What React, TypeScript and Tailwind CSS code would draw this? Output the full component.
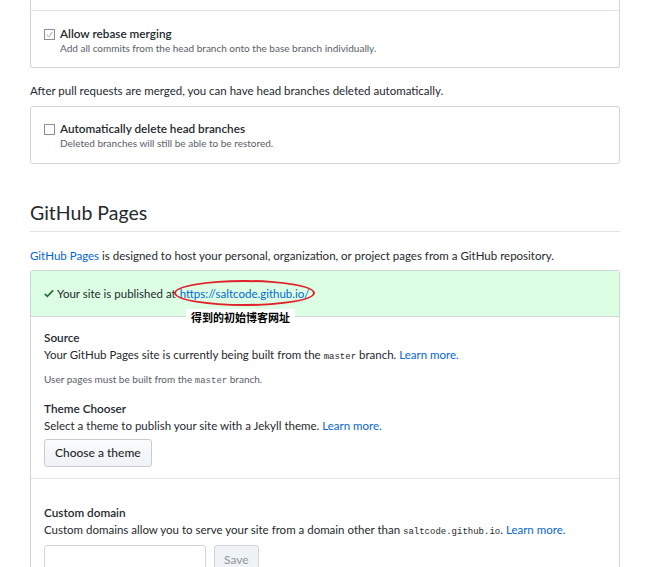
import React from "react";

const font = { fontFamily: 'Lato, "Noto Sans CJK SC", sans-serif' };

function Check({ checked }: { checked?: boolean }) {
  return (
    <span className="mt-[3px] flex h-[11px] w-[11px] shrink-0 items-center justify-center border border-[#8a8f96] bg-white">
      {checked && (
        <svg width="9" height="9" viewBox="0 0 9 9">
          <path d="M1.5 4.8 L3.6 6.8 L7.6 1.8" fill="none" stroke="#9aa0a6" strokeWidth="1" />
        </svg>
      )}
    </span>
  );
}

function Option({ title, desc, checked }: { title: string; desc: string; checked?: boolean }) {
  return (
    <div className="flex gap-[5px] px-[13px]">
      <Check checked={checked} />
      <div>
        <div className="text-[11.75px] leading-[15px] font-semibold text-[#24292e]">{title}</div>
        <div className="text-[10px] leading-[15px] text-[#586069]">{desc}</div>
      </div>
    </div>
  );
}

function Code({ children }: { children: React.ReactNode }) {
  return <span className="font-['Liberation_Mono',monospace] text-[9px]">{children}</span>;
}

export default function App() {
  return (
    <div className="min-h-[567px] bg-white pl-[30px] text-[#24292e]" style={font}>
      <div className="w-[590px]">
        <div className="h-[68px] rounded-b-[3px] border-x border-b border-[#d1d5da]">
          <div className="h-[11px] border-b border-[#e1e4e8]" />
          <div className="pt-[15px]">
            <Option checked title="Allow rebase merging" desc="Add all commits from the head branch onto the base branch individually." />
          </div>
        </div>

        <p className="mt-[14px] text-[11.5px] leading-[18px]">
          After pull requests are merged, you can have head branches deleted automatically.
        </p>

        <div className="mt-[6px] h-[58px] rounded-[3px] border border-[#d1d5da] pt-[14px]">
          <Option title="Automatically delete head branches" desc="Deleted branches will still be able to be restored." />
        </div>

        <h2 className="mt-[35px] border-b border-[#e1e4e8] pb-[4px] text-[19.5px] leading-[28px] font-normal">GitHub Pages</h2>

        <p className="mt-[15px] text-[11.5px] leading-[18px]">
          <span className="text-[#0366d6]">GitHub Pages</span> is designed to host your personal, organization, or project pages from a GitHub repository.
        </p>

        <div className="relative mt-[5px] rounded-t-[3px] border-x border-t border-[#d1d5da]">
          <div className="flex h-[46px] items-center border-b border-[#d1d5da] bg-[#dcffe4] px-[13px] text-[11.5px]">
            <svg width="10" height="9" viewBox="0 0 12 10" className="mr-[3px]">
              <path d="M1 5.5 L4 8.5 L11 1.2" fill="none" stroke="#28683a" strokeWidth="2" />
            </svg>
            <span>Your site is published at</span>
            <span className="ml-[4px] text-[#0366d6]">https://saltcode.github.io/</span>
          </div>
          <div className="absolute left-[143px] top-[9px] h-[26px] w-[141px] rounded-[50%] border-2 border-[#e0202a]" />
          <div className="absolute left-[155px] top-[38px] bg-white px-[5px] text-[11px] leading-[18px] font-bold text-black">
            得到的初始博客网址
          </div>

          <div className="border-b border-[#e1e4e8] px-[13px] pt-[12px] pb-[11px]">
            <div className="text-[11.75px] leading-[17px] font-semibold">Source</div>
            <div className="text-[11.5px] leading-[17px]">
              Your GitHub Pages site is currently being built from the <Code>master</Code> branch.{" "}
              <span className="text-[#0366d6]">Learn more.</span>
            </div>
            <div className="mt-[5px] text-[10px] leading-[16px] text-[#586069]">
              User pages must be built from the <Code>master</Code> branch.
            </div>
            <div className="mt-[11px] text-[11.75px] leading-[17px] font-semibold">Theme Chooser</div>
            <div className="text-[11.5px] leading-[17px]">
              Select a theme to publish your site with a Jekyll theme. <span className="text-[#0366d6]">Learn more.</span>
            </div>
            <button className="mt-[5px] h-[28px] rounded-[3px] border border-[#c8cbcf] bg-gradient-to-b from-[#fafbfc] to-[#eff3f6] px-[10px] text-[12px] font-medium">
              Choose a theme
            </button>
          </div>

          <div className="px-[13px] pt-[25px]">
            <div className="text-[11.75px] leading-[17px] font-semibold">Custom domain</div>
            <div className="text-[11.5px] leading-[17px]">
              Custom domains allow you to serve your site from a domain other than <Code>saltcode.github.io</Code>.{" "}
              <span className="text-[#0366d6]">Learn more.</span>
            </div>
            <div className="mt-[4px] flex gap-[8px]">
              <div className="h-[30px] w-[162px] rounded-[3px] border border-[#d1d5da] bg-white" />
              <button className="h-[30px] rounded-[3px] border border-[#d1d5da] bg-[#eff3f6] px-[9px] text-[12px] font-medium text-[#959da5]">
                Save
              </button>
            </div>
          </div>
        </div>
      </div>
    </div>
  );
}
